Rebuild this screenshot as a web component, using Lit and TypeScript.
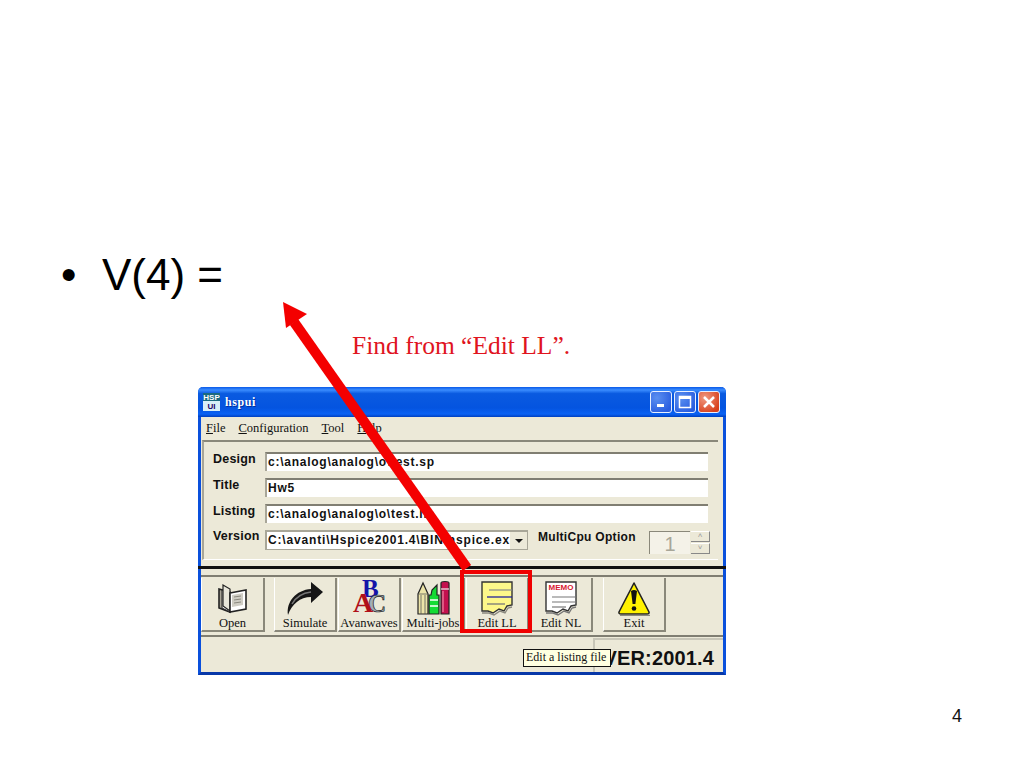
import { LitElement, html, css, svg } from "lit";
import { customElement } from "lit/decorators.js";

const icons: Record<string, unknown> = {
  open: html`<svg width="36" height="36" viewBox="0 0 36 36"><path d="M4 9l11 3v20L4 28z" fill="#a8a498" stroke="#222" stroke-width="1.6"/><path d="M7 10l8 2v20l-8-4z" fill="#fff" stroke="#222" stroke-width="1"/><path d="M8 5l7 4v22l-7-5z" fill="#e8e6da" stroke="#222" stroke-width="1.2"/><path d="M15 13l16-3v19l-16 3z" fill="#fff" stroke="#222" stroke-width="1.6"/><path d="M17 15l11-2v12l-11 2z" fill="#cfcdc4"/><path d="M19 17l7-1M19 20l7-1M19 23l7-1" stroke="#8a887e"/></svg>`,
  sim: html`<svg width="38" height="36" viewBox="0 0 38 36"><path d="M2 35C0 22 10 10 25 9V2l12 10-12 11v-6C14 17 6 24 2 35z" fill="#161616"/><path d="M6 24c4-7 10-11 19-12" stroke="#777" stroke-width="1.5" fill="none"/></svg>`,
  ava: html`<svg width="36" height="36" viewBox="0 0 36 36" class="letters"><text x="11" y="17" font-size="25" fill="#1414a8" font-weight="700">B</text><text x="17" y="32" font-size="25" fill="#a4aeb6" stroke="#222" stroke-width=".7" font-weight="700">C</text><text x="2" y="32" font-size="28" fill="#b01018" font-weight="700">A</text></svg>`,
  multi: html`<svg width="34" height="36" viewBox="0 0 34 36"><path d="M2 34V14L7 3l5 11v20z" fill="#ece4a8" stroke="#222" stroke-width="1.2"/><path d="M2 14h10M5 15v19M9 15v19" stroke="#555" stroke-width=".8"/><path d="M13 34V15h2l1-5 5-5v10h2v19z" fill="#14dc34" stroke="#222" stroke-width="1.2"/><path d="M14 20h8M14 26h8" stroke="#fff" stroke-width="1.6"/><path d="M25 34V3q0-1.500 4-1.500t4 1.500v31z" fill="#c4104e" stroke="#222" stroke-width="1.2"/><path d="M25 9h8" stroke="#eee" stroke-width="1.2"/><path d="M27 11v21" stroke="#f08aa8" stroke-width="1.2"/></svg>`,
  ll: html`<svg width="34" height="36" viewBox="0 0 34 36"><path d="M2 2h30v23l-5 1-3 5-5-2-6 4-5-2H2z" fill="#fdf78a" stroke="#333" stroke-width="1.4"/><path d="M2 33h7l5 2 6-4 5 2 3-5 4-1" fill="none" stroke="#8a887e" stroke-width="1.400"/><path d="M9 10h23" stroke="#888" stroke-width="1.2"/><path d="M7 17h25" stroke="#22229a" stroke-width="1.3"/><path d="M7 24h18" stroke="#777" stroke-width="1.3"/></svg>`,
  nl: html`<svg width="34" height="36" viewBox="0 0 34 36"><path d="M2 2h30v23l-5 1-3 5-5-2-6 4-5-2H2z" fill="#fff" stroke="#333" stroke-width="1.4"/><path d="M2 33h7l5 2 6-4 5 2 3-5 4-1" fill="none" stroke="#777" stroke-width="1.4"/><text x="17" y="10" text-anchor="middle" class="memo">MEMO</text><path d="M8 17h24M8 22h24" stroke="#777" stroke-width="1.2"/><path d="M8 27h14" stroke="#777" stroke-width="1.2"/></svg>`,
  exit: html`<svg width="36" height="36" viewBox="0 0 36 36"><path d="M18 3L33 32q.5 2-2 2H5q-2.500 0-2-2z" fill="#fff200" stroke="#222" stroke-width="1.6" stroke-linejoin="round"/><path d="M4 35.500h30" stroke="#8a887e" stroke-width="1.5"/><path d="M15 11q3-2 6 0l-1.600 13h-2.800z" fill="#111"/><circle cx="18" cy="28.500" r="2.300" fill="#111"/></svg>`,
};

const tools: [string, string, string][] = [
  ["open", "Open", "b-open"],
  ["sim", "Simulate", "b-gap"],
  ["ava", "Avanwaves", ""],
  ["multi", "Multi-jobs", ""],
  ["ll", "Edit LL", ""],
  ["nl", "Edit NL", ""],
  ["exit", "Exit", "b-gap2"],
];

const fields: [string, string][] = [
  ["Design", "c:\\analog\\analog\\o\\test.sp"],
  ["Title", "Hw5"],
  ["Listing", "c:\\analog\\analog\\o\\test.lis"],
];

@customElement("app-root")
export class AppRoot extends LitElement {
  static styles = css`
    :host { display: block; position: relative; width: 1024px; height: 768px; background: #fff; overflow: hidden; }
    .slide { display: flex; flex-direction: column; height: 768px; box-sizing: border-box; padding-top: 248px; }
    .bullet { display: flex; padding-left: 61px; font: 44px/54px "Liberation Sans", sans-serif; color: #000; height: 54px; }
    .bullet .dot { width: 41px; }
    .note { margin: 30px 0 0 352px; font: 25.500px/28px "Liberation Serif", serif; color: #e0141e; height: 28px; }
    .win { position: relative; margin: 27px 0 0 198px; width: 528px; height: 288px; box-sizing: border-box; background: #ece9d8; border: 3px solid #0a50dc; border-top: 0; border-radius: 5px 5px 0 0; border-bottom-color: #0838a8; }
    .tb { display: flex; align-items: center; height: 30px; margin: 0 -3px; padding: 0 6px 0 5px; box-sizing: border-box; border-radius: 5px 5px 0 0; background: linear-gradient(180deg, #0a5ae8 0%, #3a8cff 10%, #0a5ae0 22%, #0454e0 70%, #0a62f4 90%, #0040c0 100%); color: #fff; font: bold 12px "Liberation Serif", serif; }
    .logo { width: 17px; height: 18px; margin-right: 5px; background: linear-gradient(180deg, #1a6a80 0 45%, #d8f0f8 45% 100%); color: #206; font: bold 8px/9px "Liberation Sans", sans-serif; text-align: center; overflow: hidden; }
    .logo span { display: block; color: #fff; }
    .tb .name { flex: 1; letter-spacing: .6px; text-shadow: 1px 1px 0 #0030a0; }
    .wb { width: 22px; height: 22px; margin-left: 2px; box-sizing: border-box; border: 1px solid #e8f0ff; border-radius: 3px; background: radial-gradient(circle at 30% 30%, #5a8ff0, #2a5ee0 80%); display: flex; align-items: center; justify-content: center; }
    .wb.close { background: radial-gradient(circle at 30% 30%, #f09a80, #d8401c 80%); }
    .menu { display: flex; gap: 13px; height: 23px; align-items: center; padding-left: 5px; font: 12.500px "Liberation Serif", serif; color: #111; }
    .menu u { text-underline-offset: 1px; }
    .group { height: 120px; box-sizing: border-box; margin: 0 5px 0 1px; border-top: 2px solid #8a887a; border-left: 2px solid #a8a698; border-bottom: 1px solid #fff; padding: 10px 10px 0 9px; display: grid; grid-template-columns: 52px minmax(0, 1fr); grid-auto-rows: 19px; row-gap: 7px; }
    .lab { font: bold 12.500px/15px "Liberation Sans", sans-serif; letter-spacing: .2px; color: #111; }
    .lab.ver { line-height: 13px; }
    .inp { box-sizing: border-box; background: #fff; border-top: 2px solid #807e72; border-left: 2px solid #a8a698; padding-left: 1px; font: bold 12px/17px "Liberation Sans", sans-serif; letter-spacing: .75px; color: #111; white-space: nowrap; overflow: hidden; }
    .vrow { display: flex; }
    .sel { box-sizing: border-box; flex: none; width: 263px; height: 20px; display: flex; background: #fff; border: 1px solid #a8a698; border-top-width: 2px; border-left-width: 2px; }
    .sel span { flex: 1; padding-left: 1px; font: bold 12px/17px "Liberation Sans", sans-serif; letter-spacing: .83px; color: #111; white-space: nowrap; overflow: hidden; }
    .sel i { width: 17px; background: #ece9d8; display: flex; align-items: center; justify-content: center; }
    .sel i b { width: 0; height: 0; border: 4px solid transparent; border-top: 4px solid #111; border-bottom: 0; }
    .mc { flex: none; margin-left: 10px; width: 111px; font: bold 12px/15px "Liberation Sans", sans-serif; letter-spacing: .3px; color: #111; }
    .spin { flex: none; box-sizing: border-box; width: 41px; height: 23px; margin-top: 1px; border-top: 1px solid #8a887a; border-left: 1px solid #8a887a; text-align: center; font: 20px/24px "Liberation Sans", sans-serif; color: #a8a698; background: #f4f2e8; }
    .sb { flex: none; width: 19px; height: 23px; margin-left: 1px; display: flex; flex-direction: column; gap: 1px; margin-top: 1px; }
    .sb i { flex: 1; background: #ece9d8; border-top: 1px solid #fff; border-bottom: 1px solid #888; border-right: 1px solid #888; font: 8px/8px "Liberation Sans", sans-serif; text-align: center; color: #999; font-style: normal; }
    .rule { height: 3px; margin: 6px -3px 0; background: #111; }
    .tools { display: flex; height: 62px; margin-top: 6px; box-sizing: border-box; padding-top: 1px; border-top: 2px solid #807e72; border-bottom: 2px solid #807e72; }
    .tbtn { box-sizing: border-box; width: 63px; height: 54px; margin-right: 1px; display: flex; flex-direction: column; align-items: center; padding-top: 2px; border-left: 1px solid #fff; border-right: 2px solid #8a887a; border-bottom: 2px solid #8a887a; font: 12.500px/14px "Liberation Serif", serif; color: #111; background: #ece9d8; white-space: nowrap; }
    .tbtn svg { display: block; flex: none; }
    .b-open { width: 64px; }
    .b-gap { margin-left: 8px; }
    .b-gap2 { margin-left: 9px; }
    .letters text { font-family: "Liberation Serif", serif; }
    .memo { font: bold 8px "Liberation Sans", sans-serif; fill: #d81830; }
    .status { display: flex; height: 35px; justify-content: flex-end; }
    .ver-p { box-sizing: border-box; width: 130px; margin-top: 1px; border-left: 2px solid #c8c6b8; border-top: 2px solid #c8c6b8; text-align: right; padding: 6px 9px 0 0; font: bold 20px/24px "Liberation Sans", sans-serif; letter-spacing: .15px; color: #111; }
    .tip { position: absolute; left: 322px; top: 262px; box-sizing: border-box; width: 88px; height: 18px; padding-left: 2px; background: #ffffe1; border: 1px solid #111; font: 12px/15px "Liberation Serif", serif; color: #111; white-space: nowrap; overflow: hidden; }
    .red { position: absolute; left: 259px; top: 183px; box-sizing: border-box; width: 72px; height: 63px; border: 4px solid #f00000; pointer-events: none; }
    .page { margin: 31px 62px 0 auto; font: 18px/21px "Liberation Sans", sans-serif; color: #111; }
    .arrow { position: absolute; inset: 0; pointer-events: none; }
  `;

  render() {
    return html`
      <div class="slide">
        <div class="bullet"><span class="dot">•</span><span>V(4) =</span></div>
        <div class="note">Find from “Edit LL”.</div>
        <div class="win">
          <div class="tb">
            <div class="logo"><span>HSP</span>UI</div>
            <span class="name">hspui</span>
            <div class="wb"><svg width="10" height="10" viewBox="0 0 10 10"><rect x="1" y="7" width="7" height="3" fill="#fff"/></svg></div>
            <div class="wb"><svg width="14" height="14" viewBox="0 0 14 14"><rect x="1.500" y="1.500" width="11" height="11" fill="none" stroke="#fff" stroke-width="1.500"/><rect x="1" y="1" width="12" height="3" fill="#fff"/></svg></div>
            <div class="wb close"><svg width="14" height="14" viewBox="0 0 14 14"><path d="M2 2l10 10M12 2L2 12" stroke="#fff" stroke-width="2.500"/></svg></div>
          </div>
          <div class="menu">
            <span><u>F</u>ile</span><span><u>C</u>onfiguration</span><span><u>T</u>ool</span><span><u>H</u>elp</span>
          </div>
          <div class="group">
            ${fields.map(([l, v]) => html`<div class="lab">${l}</div><div class="inp">${v}</div>`)}
            <div class="lab ver">Version</div>
            <div class="vrow">
              <div class="sel"><span>C:\\avanti\\Hspice2001.4\\BIN\\hspice.ex</span><i><b></b></i></div>
              <div class="mc">MultiCpu Option</div>
              <div class="spin">1</div>
              <div class="sb"><i>˄</i><i>˅</i></div>
            </div>
          </div>
          <div class="rule"></div>
          <div class="tools">
            ${tools.map(([ic, l, c]) => html`<div class="tbtn ${c}">${icons[ic]}<span>${l}</span></div>`)}
          </div>
          <div class="status"><div class="ver-p">VER:2001.4</div></div>
          <div class="tip">Edit a listing file</div>
          <div class="red"></div>
        </div>
        <div class="page">4</div>
      </div>
      <svg class="arrow" width="1024" height="768" viewBox="0 0 1024 768">
        ${svg`<path d="M467 568L294 322" stroke="#f40000" stroke-width="10" fill="none"/><path d="M283 302L307 314 286 328z" fill="#f40000"/>`}
      </svg>
    `;
  }
}
